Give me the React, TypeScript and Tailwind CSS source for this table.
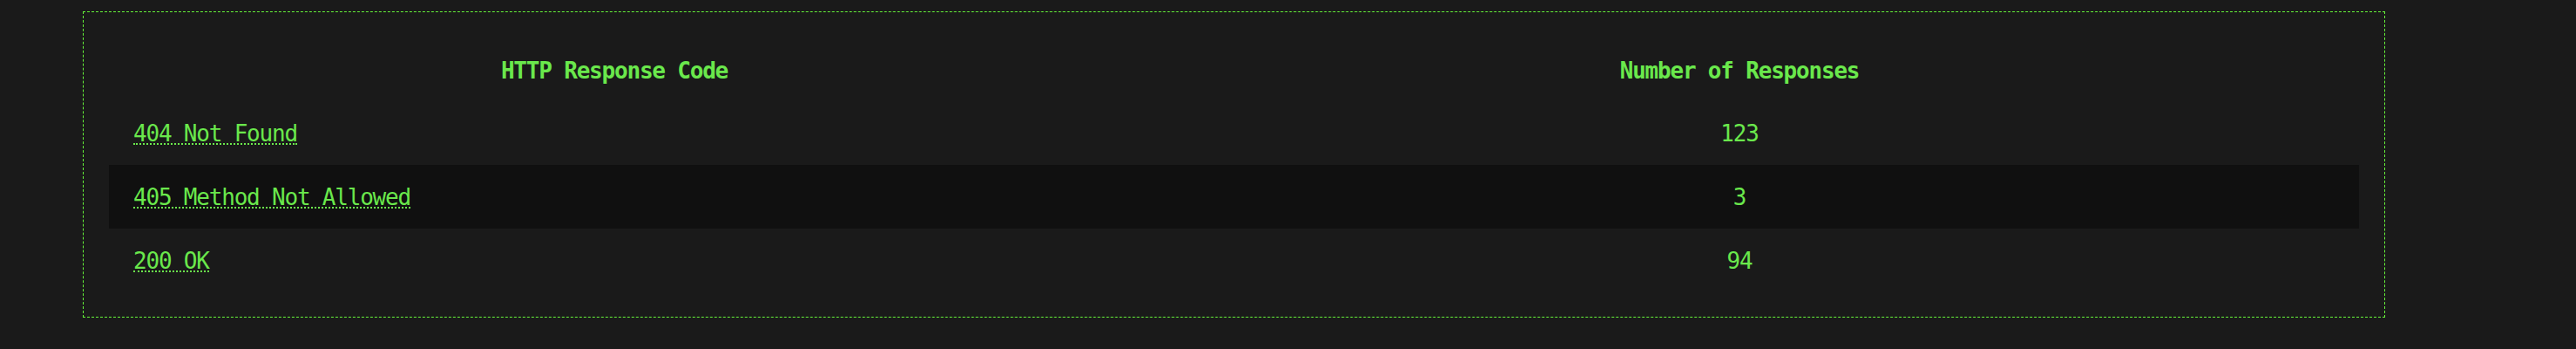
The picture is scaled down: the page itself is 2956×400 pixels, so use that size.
const rows = [
  { code: "404 Not Found", count: 123 },
  { code: "405 Method Not Allowed", count: 3 },
  { code: "200 OK", count: 94 },
];

export default function App() {
  return (
    <div
      className="h-[400px] w-full overflow-hidden bg-[#1a1a1a] pt-[13px] text-[#6ae84c]"
      style={{ fontFamily: '"DejaVu Sans Mono", monospace' }}
    >
      <div className="ml-[95px] w-[2642px] border border-dashed border-[#66f53a] px-[29px] pt-[30px] pb-[28px]">
        <table className="w-full table-fixed border-collapse text-[26px] leading-none tracking-[-1.2px]">
          <colgroup>
            <col className="w-[1160px]" />
            <col />
          </colgroup>
          <thead>
            <tr className="h-[73px]">
              <th className="p-0 text-center align-middle font-bold">HTTP Response Code</th>
              <th className="p-0 text-center align-middle font-bold">Number of Responses</th>
            </tr>
          </thead>
          <tbody>
            {rows.map((r, i) => (
              <tr
                key={r.code}
                className={i === 1 ? "h-[73px] bg-[#101010]" : i === 0 ? "h-[72px]" : "h-[73px]"}
              >
                <td className="p-0 pl-[28px] text-left align-middle">
                  <a
                    href="#"
                    className="inline-block border-b-2 border-dotted border-[#6ae84c] leading-[22px]"
                  >
                    {r.code}
                  </a>
                </td>
                <td className="p-0 text-center align-middle">{r.count}</td>
              </tr>
            ))}
          </tbody>
        </table>
      </div>
    </div>
  );
}
